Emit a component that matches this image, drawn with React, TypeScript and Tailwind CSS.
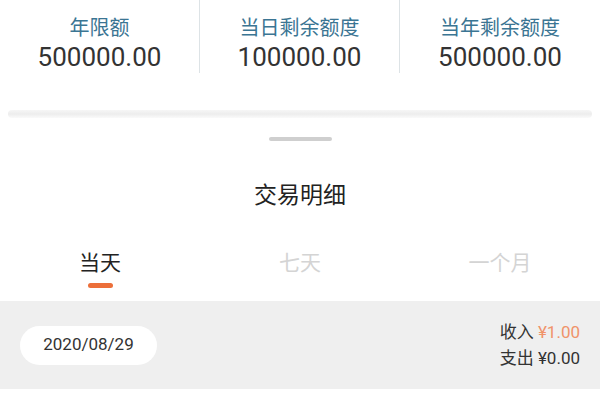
export default function App() {
  const limits = [
    { label: '年限额', value: '500000.00' },
    { label: '当日剩余额度', value: '100000.00' },
    { label: '当年剩余额度', value: '500000.00' },
  ];
  const tabs = ['当天', '七天', '一个月'];
  const active = 0;

  return (
    <div className="w-[600px] h-[400px] overflow-hidden bg-white font-['Roboto','Noto_Sans_CJK_SC',sans-serif]">
      <div className="h-[110px]">
        <div className="grid grid-cols-3 h-[73px]">
          {limits.map((item, i) => (
            <div
              key={item.label}
              className={`flex flex-col items-center pt-[14px] ${i < 2 ? 'border-r border-[#dde3e6]' : ''}`}
            >
              <span className="text-[20px] leading-[28px] text-[#3b7593]">{item.label}</span>
              <span className="text-[26px] leading-[30px] text-[#333]">{item.value}</span>
            </div>
          ))}
        </div>
      </div>

      <div className="mx-[8px] h-[8px] rounded-full bg-gradient-to-b from-[#f6f6f6] via-[#ededed] to-[#fafafa]" />

      <div className="flex flex-col items-center">
        <div className="mt-[19px] h-[4px] w-[63px] rounded-full bg-[#cfcfcf]" />
        <div className="mt-[40px] text-[23px] leading-[30px] text-[#222]">交易明细</div>
      </div>

      <div className="mt-[37px] grid grid-cols-3">
        {tabs.map((t, i) => (
          <div key={t} className="flex flex-col items-center">
            <span className={`text-[21px] leading-[30px] ${i === active ? 'text-[#222]' : 'text-[#d4d4d4]'}`}>{t}</span>
            <div className={`mt-[5px] h-[5px] w-[25px] rounded-full ${i === active ? 'bg-[#ec6f3a]' : 'bg-transparent'}`} />
          </div>
        ))}
      </div>

      <div className="mt-[13px] h-[88px] bg-[#efefef] flex items-center justify-between pl-[20px] pr-[20px]">
        <div className="h-[39px] w-[137px] rounded-full bg-white flex items-center justify-center text-[17px] text-[#333]">
          2020/08/29
        </div>
        <div className="flex flex-col items-start text-[17px] leading-[26px] text-[#333]">
          <span>
            收入 <span className="text-[#f0936a]">¥1.00</span>
          </span>
          <span>支出 ¥0.00</span>
        </div>
      </div>
    </div>
  );
}
